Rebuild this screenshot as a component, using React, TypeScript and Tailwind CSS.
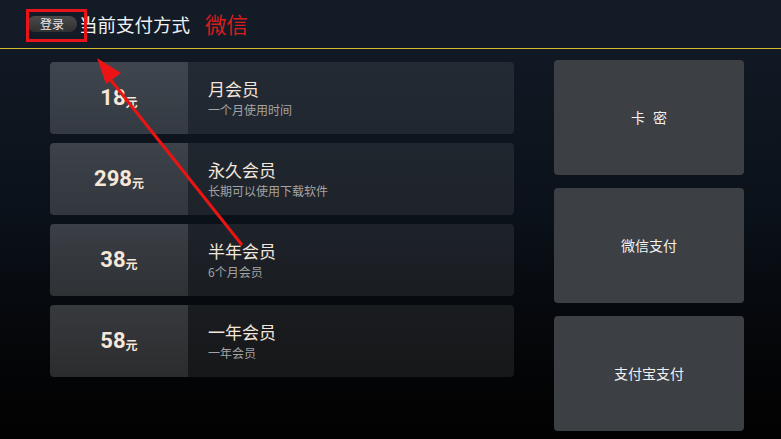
import React from "react";

const plans = [
  { price: "18", title: "月会员", sub: "一个月使用时间" },
  { price: "298", title: "永久会员", sub: "长期可以使用下载软件" },
  { price: "38", title: "半年会员", sub: "6个月会员" },
  { price: "58", title: "一年会员", sub: "一年会员" },
];

export default function App() {
  return (
    <div
      className="relative w-[781px] h-[439px] overflow-hidden bg-gradient-to-b from-[#131b27] via-[#0b1119] to-[#020202] text-white"
      style={{ fontFamily: '"Noto Sans CJK SC", Roboto, sans-serif' }}
    >
      <header className="h-[49px] flex items-center pl-[27px] border-b border-[#d6bb2c] bg-[#131b27]">
        <button className="w-[50px] h-[16px] rounded-full bg-gradient-to-b from-[#4a4a4a] to-[#303030] text-[12px] leading-none text-[#e8e8e8] flex items-center justify-center">
          登录
        </button>
        <span className="ml-[2px] text-[18.5px] leading-none text-[#f0f0f0]">当前支付方式</span>
        <span className="ml-[15px] text-[21.5px] leading-none text-[#d81e1e]">微信</span>
      </header>

      <div className="flex pl-[50px]">
        <div className="w-[464px] mt-[13px] flex flex-col gap-[9px]">
          {plans.map((p) => (
            <div key={p.title} className="h-[72px] flex rounded-[4px] overflow-hidden bg-white/[0.08]">
              <div className="w-[138px] flex items-center justify-center bg-gradient-to-b from-white/[0.13] to-white/[0.09]">
                <span
                  className="text-[22px] font-bold text-[#f6e7d8] leading-none"
                  style={{ fontFamily: 'Roboto, "Noto Sans CJK SC", sans-serif' }}
                >
                  {p.price}
                </span>
                <span className="text-[12px] font-bold text-[#f6e7d8] mt-[8px]">元</span>
              </div>
              <div className="flex flex-col justify-center pl-[20px]">
                <div className="text-[17px] leading-[22px] text-[#f4e6da]">{p.title}</div>
                <div className="mt-[2px] text-[12px] leading-[16px] text-[#a3a3a3]">{p.sub}</div>
              </div>
            </div>
          ))}
        </div>
        <div className="ml-[40px] w-[190px] mt-[11px] flex flex-col gap-[13px]">
          <div className="h-[115px] rounded-[4px] bg-[#3c3f44] flex items-center justify-center gap-[8px] text-[14px] text-[#f2f2f2]">
            <span>卡</span>
            <span>密</span>
          </div>
          <div className="h-[115px] rounded-[4px] bg-[#3c3f44] flex items-center justify-center text-[14px] text-[#f2f2f2]">
            微信支付
          </div>
          <div className="h-[115px] rounded-[4px] bg-[#3c3f44] flex items-center justify-center text-[14px] text-[#f2f2f2]">
            支付宝支付
          </div>
        </div>
      </div>

      <div className="absolute left-[26px] top-[9px] w-[61px] h-[33px] border-[3px] border-[#e8141a]" />
      <svg className="absolute left-0 top-0" width="781" height="439">
        <line x1="242" y1="245" x2="106" y2="74" stroke="#ea1414" strokeWidth="3" />
        <polygon points="97,58 106,84 121,73" fill="#ea1414" />
      </svg>
    </div>
  );
}
